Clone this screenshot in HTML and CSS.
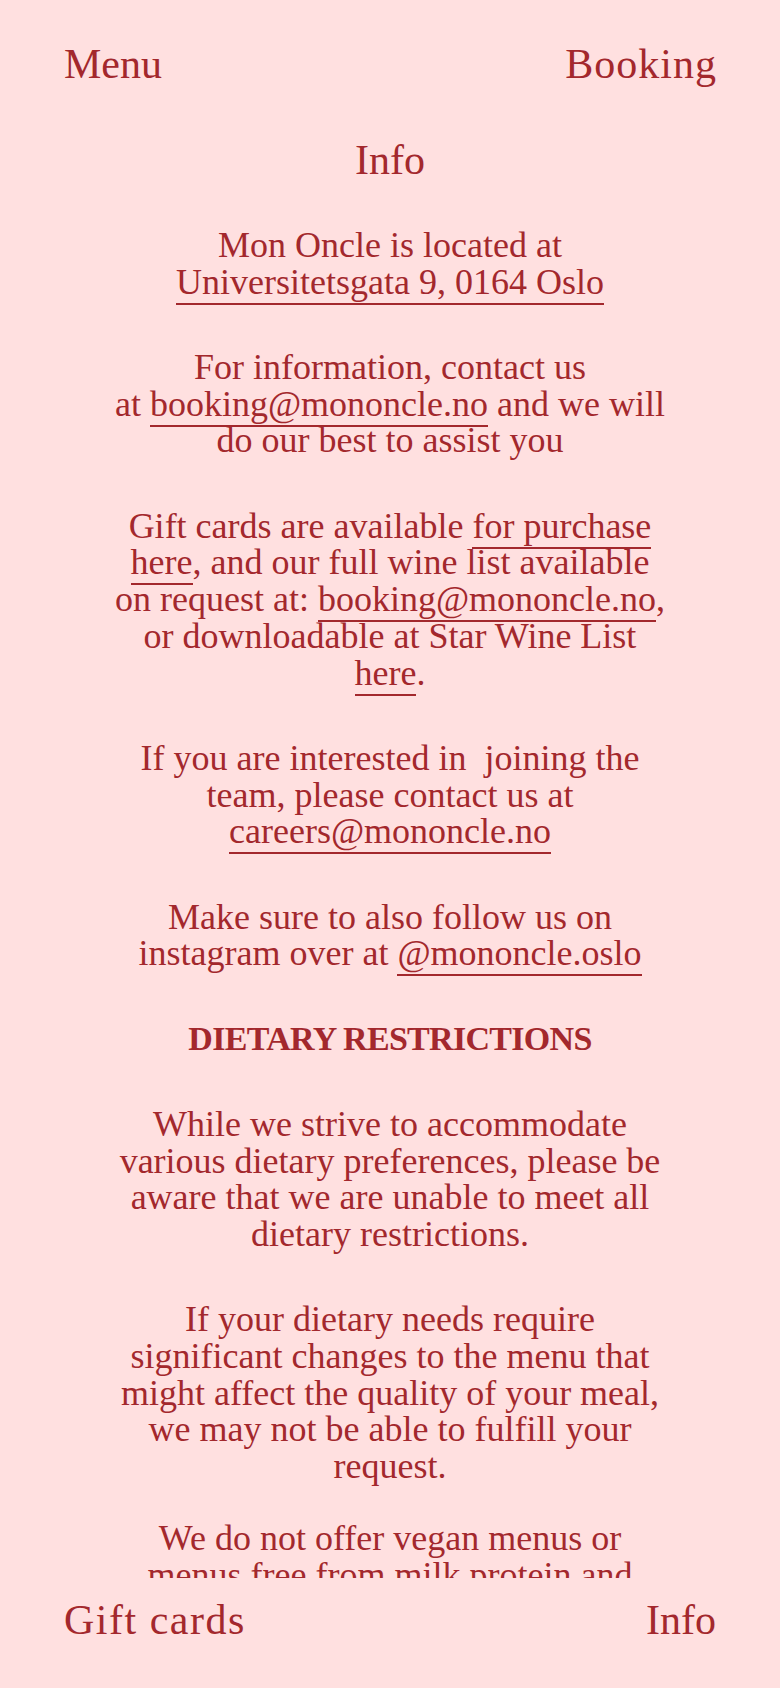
FILE: index.html
```html
<!DOCTYPE html>
<html lang="en">
<head>
<meta charset="utf-8">
<meta name="viewport" content="width=device-width, initial-scale=1">
<title>Info – Mon Oncle</title>
<link rel="stylesheet" href="styles.css">
</head>
<body>
<div class="page">
  <header class="topbar">
    <a class="nav-link" href="#">Menu</a>
    <a class="nav-link nav-wide" href="#">Booking</a>
  </header>

  <main class="scroller">
    <div class="info">
      <h1 class="info-title">Info</h1>

      <p class="para">Mon Oncle is located at<br><a class="ul" href="#">Universitetsgata 9, 0164 Oslo</a></p>

      <p class="para">For information, contact us<br>at <a class="ul" href="#">booking@mononcle.no</a> and we will<br>do our best to assist you</p>

      <p class="para">Gift cards are available <a class="ul" href="#">for purchase</a><br><a class="ul" href="#">here</a>, and our full wine list available<br>on request at: <a class="ul" href="#">booking@mononcle.no</a>,<br>or downloadable at Star Wine List<br><a class="ul" href="#">here</a>.</p>

      <p class="para">If you are interested in &nbsp;joining the<br>team, please contact us at<br><a class="ul" href="#">careers@mononcle.no</a></p>

      <p class="para">Make sure to also follow us on<br>instagram over at <a class="ul" href="#">@mononcle.oslo</a></p>

      <h2 class="section-title">DIETARY RESTRICTIONS</h2>

      <p class="para">While we strive to accommodate<br>various dietary preferences, please be<br>aware that we are unable to meet all<br>dietary restrictions.</p>

      <p class="para">If your dietary needs require<br>significant changes to the menu that<br>might affect the quality of your meal,<br>we may not be able to fulfill your<br>request.</p>

      <p class="para para-tight">We do not offer vegan menus or<br>menus free from milk protein and<br>gluten. Please inform us of any<br>allergies when booking.</p>
    </div>
  </main>

  <footer class="bottombar">
    <a class="nav-link nav-wider" href="#">Gift cards</a>
    <a class="nav-link" href="#">Info</a>
  </footer>
</div>
</body>
</html>
```

FILE: styles.css
```css
html, body {
  margin: 0;
  padding: 0;
}

body {
  background: #ffe0e0;
  color: #a3282d;
  font-family: "Liberation Serif", "Times New Roman", serif;
}

a {
  color: inherit;
  text-decoration: none;
}

.page {
  display: flex;
  flex-direction: column;
  height: 1688px;
  overflow: hidden;
}

.topbar,
.bottombar {
  flex: none;
  display: flex;
  justify-content: space-between;
  align-items: flex-start;
  padding: 0 64px;
  background: #ffe0e0;
}

.topbar {
  padding-top: 43px;
}

.bottombar {
  padding-top: 21px;
  padding-bottom: 47px;
}

.nav-link {
  font-size: 42px;
  line-height: 42px;
}

.nav-wide {
  letter-spacing: 1px;
  margin-right: -1px;
}

.nav-wider {
  letter-spacing: 1.5px;
}

.scroller {
  flex: 1;
  min-height: 0;
  overflow: hidden;
}

.info {
  display: flex;
  flex-direction: column;
  align-items: center;
  text-align: center;
  padding: 54px 40px 160px;
}

.info-title {
  margin: 0 0 46px;
  font-size: 42px;
  line-height: 42px;
  font-weight: normal;
}

.para {
  margin: 0 0 48.6px;
  font-size: 36px;
  line-height: 36.7px;
  white-space: nowrap;
}

.para-tight {
  margin-top: -13px;
}

.section-title {
  margin: 0 0 48.6px;
  font-size: 34px;
  line-height: 36.7px;
  font-weight: bold;
  letter-spacing: -0.7px;
}

.ul {
  border-bottom: 2px solid currentColor;
  padding-bottom: 1px;
}
```
